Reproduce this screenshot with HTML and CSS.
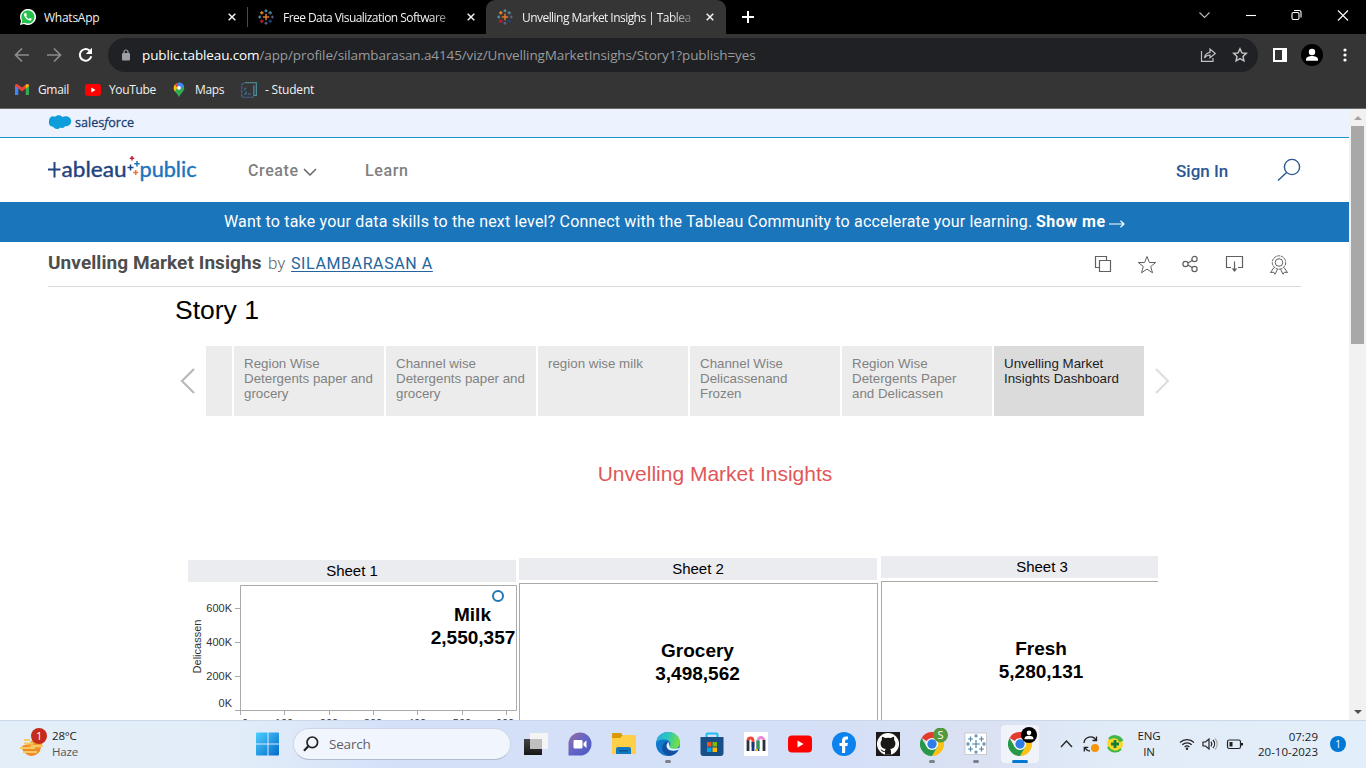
FILE: index.html
```html
<!DOCTYPE html>
<html lang="en">
<head>
<meta charset="utf-8">
<title>Unvelling Market Insighs | Tableau Public</title>
<link rel="stylesheet" href="styles.css">
</head>
<body>
<svg class="defs" width="0" height="0" aria-hidden="true">
  <defs>
    <symbol id="tableau" viewBox="0 0 16 16">
      <g fill="none" stroke-width="1.2">
        <path stroke="#e8762c" stroke-width="1.5" d="M8 4.8v6.4M4.8 8h6.4"/>
        <path stroke="#5b9aa8" d="M8 .3v3M6.500 1.800h3M1.700 6.500v3M.2 8h3"/>
        <path stroke="#5b6591" d="M8 12.700v3M6.500 14.200h3M14.300 6.500v3M12.800 8h3"/>
        <path stroke="#eb912c" d="M3.800 2v3.600M2 3.800h3.600"/>
        <path stroke="#59879b" d="M12.200 2v3.600M10.400 3.800H14"/>
        <path stroke="#c72035" d="M3.800 10.400V14M2 12.200h3.600"/>
        <path stroke="#1f457e" d="M12.200 10.400V14M10.400 12.200H14"/>
      </g>
    </symbol>
    <symbol id="close" viewBox="0 0 8 8"><path d="M.7.7l6.600 6.600M7.300.7L.7 7.300" fill="none" stroke="#f1f1f1" stroke-width="1.500"/></symbol>
    <symbol id="chrome" viewBox="0 0 24 24">
      <path fill="#e33b2e" d="M12 12L1.600 6A12 12 0 0 1 22.400 6z"/>
      <path fill="#fbc116" d="M12 12V6h10.400A12 12 0 0 1 12 24l5.200-9z"/>
      <path fill="#279847" d="M12 12l5.200 3L12 24A12 12 0 0 1 1.600 6l5.200 9z"/>
      <circle cx="12" cy="12" r="6" fill="#fff"/><circle cx="12" cy="12" r="4.700" fill="#2f7de9"/>
    </symbol>
    <symbol id="person" viewBox="0 0 22 22"><circle cx="11" cy="11" r="11" fill="#000"/><circle cx="11" cy="8" r="3.200" fill="#fff"/><path fill="#fff" d="M5 16.800v-1.500C5 13 8.500 12 11 12s6 1 6 3.300v1.500z"/></symbol>
  </defs>
</svg>

<header class="browser">
  <div class="tabs">
    <div class="tab tab-first">
      <svg width="16" height="16" viewBox="0 0 16 16"><path d="M0 16l1.100-4A8 8 0 1 1 4 14.900z" fill="#fff"/><path d="M1.500 14.500l.8-3A6.600 6.600 0 1 1 4.600 13.700z" fill="#25c04b"/><path d="M5 4c-1 .5-1.300 1.700-.5 3.200 1 2 2.700 3.600 4.700 4.300 1.400.4 2.500-.3 2.500-1.700L9.900 8.900l-1 1C7.700 9.500 6.600 8.400 6.100 7.300l.8-1L6.100 4z" fill="#fff"/></svg>
      <span class="tab-title whatsapp">WhatsApp</span>
      <svg class="x" width="8" height="8"><use href="#close"/></svg>
    </div>
    <div class="tab tab-second">
      <svg width="16" height="16"><use href="#tableau"/></svg>
      <span class="tab-title fade">Free Data Visualization Software</span>
      <svg class="x" width="8" height="8"><use href="#close"/></svg>
    </div>
    <div class="tab tab-active">
      <svg width="16" height="16"><use href="#tableau"/></svg>
      <span class="tab-title fade">Unvelling Market Insighs | Tablea</span>
      <svg class="x" width="8" height="8"><use href="#close"/></svg>
    </div>
    <svg class="new-tab" width="12" height="12" viewBox="0 0 12 12"><path d="M6 0v12M0 6h12" stroke="#fff" stroke-width="2"/></svg>
    <div class="window-controls">
      <svg width="150" height="12" viewBox="0 0 150 12" fill="none" stroke="#fff" stroke-width="1.100">
        <path d="M.5 3.500l5 5 5-5" stroke="#bbb"/><path d="M47 6.500h10"/><rect x="93" y="3.500" width="7" height="7" rx="1.500"/><path d="M95 1.500h5a2 2 0 0 1 2 2v5"/><path d="M139 1.500l10 10M149 1.500l-10 10"/>
      </svg>
    </div>
  </div>
  <div class="toolbar">
    <svg class="nav" width="84" height="18" viewBox="0 0 84 18" fill="none">
      <path d="M15 9H2M8 2.500L1.500 9 8 15.500M33 9h13M40 2.500L46.500 9 40 15.500" stroke="#8b8c8e" stroke-width="1.700"/>
      <path d="M75.500 4.500a5.800 5.800 0 1 0 1.800 5.800" stroke="#fff" stroke-width="2"/><path d="M78 1.800v6.200h-6.200z" fill="#fff"/>
    </svg>
    <div class="omnibox">
      <svg width="8" height="12" viewBox="0 0 8 12"><rect y="4" width="8" height="7.500" rx="1" fill="#9aa0a6"/><path d="M2 4.500V3a2 2 0 0 1 4 0v1.500" fill="none" stroke="#9aa0a6" stroke-width="1.200"/></svg>
      <span class="url"><b>public.tableau.com</b>/app/profile/silambarasan.a4145/viz/UnvellingMarketInsighs/Story1?publish=yes</span>
      <svg class="omni-icons" width="48" height="16" viewBox="0 0 48 16" fill="none" stroke="#c0c1c3" stroke-width="1.200">
        <path d="M1.500 4v10.400H13V11M4.500 11c.4-3.500 2.200-5.300 5.500-5.700V2l5.300 4.500-5.300 4.300V8C7.500 8 5.800 9 4.500 11z"/>
        <path stroke-width="1.500" d="M40 1.800l1.900 4.100 4.400.5-3.300 3 .9 4.400-3.900-2.200-3.900 2.200.9-4.400-3.300-3 4.400-.5z"/>
      </svg>
    </div>
    <svg class="panel-icon" width="14" height="14" viewBox="0 0 14 14"><path d="M1 1h12v12H1z" fill="#333" stroke="#fff" stroke-width="2"/><path d="M9 0h5v14H9z" fill="#fff"/></svg>
    <svg class="avatar" width="22" height="22"><use href="#person"/></svg>
    <svg class="dots" width="4" height="14" viewBox="0 0 4 14" fill="#fff"><circle cx="2" cy="2" r="1.600"/><circle cx="2" cy="7" r="1.600"/><circle cx="2" cy="12" r="1.600"/></svg>
  </div>
  <nav class="bookmarks">
    <svg width="14" height="11" viewBox="0 0 14 11"><path d="M0 1v10h3.300V4z" fill="#4285f4"/><path d="M14 1v10h-3.300V4z" fill="#34a853"/><path d="M0 1.800C0 .2 1.700-.5 3 .5l4 3.100 4-3.100c1.300-1 3-.3 3 1.300L7 7.400z" fill="#ea4335"/><path d="M10.700.8V4.600L14 2.100C14 .2 12 -.3 10.700.8z" fill="#fbbc04"/></svg>
    <span class="bm gmail">Gmail</span>
    <svg width="16" height="12" viewBox="0 0 16 12"><rect width="16" height="12" rx="3" fill="#f00"/><path d="M6.300 3.500v5l4.200-2.500z" fill="#fff"/></svg>
    <span class="bm youtube">YouTube</span>
    <svg width="12" height="16" viewBox="0 0 12 16"><path d="M6 15.500C5 11.500.7 10 .7 6A5.300 5.300 0 0 1 11.300 6c0 4-4.300 5.500-5.300 9.500z" fill="#34a853"/><path d="M.7 6.500A5.300 5.300 0 0 1 2 2.500L4.700 5 2 9.500C1.200 8.500.8 7.600.7 6.500z" fill="#fbbc04"/><path d="M2 2.500A5.300 5.300 0 0 1 4.600.9L5.500 4 4 6z" fill="#ea4335"/><path d="M4.600.9A5.300 5.300 0 0 1 11 4L7 7.500 5 4.200z" fill="#4285f4"/><circle cx="6" cy="5.800" r="1.900" fill="#fff"/></svg>
    <span class="bm maps">Maps</span>
    <svg width="16" height="16" viewBox="0 0 16 16" fill="none" stroke="#509ba1" stroke-width="1.100"><path d="M3.500.7h11.800v12.800h-2.500V3.500"/><path stroke="#3d6fa8" stroke-dasharray="3 1" d="M12.800 3.500V15.300H.8V2.500L3.500.7M3 12h8M3 8l3-3M4 12l2-3"/></svg>
    <span class="bm student">- Student</span>
  </nav>
</header>

<div class="viewport">
  <main class="page">
    <div class="salesforce">
      <svg width="88" height="18" viewBox="0 0 88 18"><path d="M1 8C1 4 4.500 2.300 7 3.800 9 1.400 13 1.800 14.200 4c3.600-2 9-.2 9 4.300 0 3.500-3.600 5.600-6 4.800-1 1.900-3 2.400-5 1.400-2 2.500-6 2-7.200-.9C2.700 14 .3 11.500 1 8z" fill="#0d9dda"/><text x="27" y="13.500" textLength="59" lengthAdjust="spacingAndGlyphs" class="sf-word">sales<tspan font-style="italic">f</tspan>orce</text></svg>
    </div>
    <div class="site-nav">
      <svg class="logo" width="150" height="32" viewBox="0 0 150 32">
        <path d="M0 15.500h12.500M6.500 8v15.500" fill="none" stroke="#1f447e" stroke-width="2"/>
        <text x="13.500" y="23.300" textLength="65" lengthAdjust="spacingAndGlyphs" class="word-tableau">ableau</text>
        <text x="91.500" y="23.300" textLength="57" lengthAdjust="spacingAndGlyphs" class="word-public">public</text>
        <g fill="none" stroke-width="1.500"><path stroke="#c72035" d="M84 2v4.400M81.800 4.200h4.400"/><path stroke="#1f447e" d="M82.500 10.500v6M79.500 13.500h6"/><path stroke="#1c74bb" d="M89 7v5.400M86.300 9.700h5.400"/><path stroke="#e8762c" d="M87.700 16v5M85.200 18.500h5"/></g>
      </svg>
      <span class="nav-link create">Create</span>
      <svg class="caret" width="14" height="8" viewBox="0 0 14 8"><path d="M1 1l6 6 6-6" fill="none" stroke="#666" stroke-width="1.500"/></svg>
      <span class="nav-link learn">Learn</span>
      <span class="nav-link signin">Sign In</span>
      <svg class="search" width="24" height="24" viewBox="0 0 24 24" fill="none" stroke="#2a5694" stroke-width="1.400"><circle cx="15" cy="9" r="7.600"/><path d="M9.600 14.400L1 22.500"/></svg>
    </div>
    <div class="banner"><span class="banner-copy">Want to take your data skills to the next level? Connect with the Tableau Community to accelerate your learning.</span><b>Show me</b><svg width="16" height="8" viewBox="0 0 16 8"><path d="M0 4h15M11.500.8L15 4l-3.500 3.200" fill="none" stroke="#fff" stroke-width="1.200"/></svg></div>
    <div class="viz-head">
      <h1>Unvelling Market Insighs</h1><span class="by">by</span><a class="author">SILAMBARASAN A</a>
      <svg class="actions" width="194" height="22" viewBox="0 0 194 22" fill="none" stroke="#606060" stroke-width="1.200">
        <path d="M5.500 12.500h-4v-11h11v4M5.500 5.500h11v11h-11z"/>
        <path stroke-width="1" d="M53 1.500l2.400 6h6.300l-5 4 1.800 6.300-5.500-3.700-5.500 3.700 1.800-6.300-5-4h6.300z"/>
        <circle cx="91.500" cy="9" r="2.600"/><circle cx="100.500" cy="4" r="2.600"/><circle cx="100.500" cy="14" r="2.600"/><path d="M94 8l4-2.500M94 10l4 2.500"/>
        <path d="M137 12.500h-4.500v-11h16v11H144M140.500 6.500v9"/><path d="M137.700 13.500h5.600l-2.800 3.500z" fill="#606060" stroke="none"/>
        <g stroke-width="1"><circle cx="185" cy="7.500" r="3.800"/><circle cx="185" cy="7.500" r="6.700" stroke-dasharray="3 .7"/><path d="M180 12.500l-3.500 5 3.200-.3 1.300 2 2.500-5M190 12.500l3.500 5-3.200-.3-1.300 2-2.500-5"/></g>
      </svg>
    </div>

    <section class="story">
      <h2>Story 1</h2>
      <div class="story-nav">
        <svg class="prev" width="16" height="28" viewBox="0 0 16 28"><path d="M14 2L2 14l12 12" fill="none" stroke="#b9b9b9" stroke-width="2.200"/></svg>
        <div class="points">
          <div class="point stub"></div>
          <div class="point">Region Wise<br>Detergents paper and<br>grocery</div>
          <div class="point">Channel wise<br>Detergents paper and<br>grocery</div>
          <div class="point">region wise milk</div>
          <div class="point">Channel Wise<br>Delicassenand<br>Frozen</div>
          <div class="point">Region Wise<br>Detergents Paper<br>and Delicassen</div>
          <div class="point current">Unvelling Market<br>Insights Dashboard</div>
        </div>
        <svg class="next" width="16" height="28" viewBox="0 0 16 28"><path d="M2 2l12 12L2 26" fill="none" stroke="#dedede" stroke-width="2.200"/></svg>
      </div>
      <h3>Unvelling Market Insights</h3>
      <div class="sheets">
        <div class="sheet sheet-1">
          <h4>Sheet 1</h4>
          <svg width="330" height="140" viewBox="0 0 330 140" class="chart">
            <path d="M52.500 133V3.500H328.500V128.500H47M47 26.500h5M47 60.500h5M47 94.500h5M96.500 128v5M141.500 128v5M185.500 128v5M229.500 128v5M274.500 128v5M318.500 128v5" fill="none" stroke="#aaa"/>
            <g text-anchor="end"><text x="44" y="30">600K</text><text x="44" y="64">400K</text><text x="44" y="98">200K</text><text x="44" y="125">0K</text></g>
            <text transform="translate(13 64.500) rotate(-90)" text-anchor="middle">Delicassen</text>
            <g text-anchor="middle"><text x="57" y="145">0</text><text x="96" y="145">100</text><text x="141" y="145">200</text><text x="185" y="145">300</text><text x="229" y="145">400</text><text x="274" y="145">500</text><text x="317" y="145">600</text></g>
            <circle cx="310" cy="14" r="5" fill="none" stroke="#1f77b4" stroke-width="2"/>
            <g class="mark" text-anchor="middle"><text x="284.500" y="39">Milk</text><text x="285" y="62">2,550,357</text></g>
          </svg>
        </div>
        <div class="sheet sheet-2"><h4>Sheet 2</h4><div class="box">Grocery<br>3,498,562</div></div>
        <div class="sheet sheet-3"><h4>Sheet 3</h4><div class="box">Fresh<br>5,280,131</div></div>
      </div>
    </section>
  </main>
  <div class="scrollbar">
    <svg width="17" height="17" viewBox="0 0 17 17"><path d="M5 11l4-4 4 4z" fill="#a3a3a3"/></svg>
    <div class="thumb"></div>
    <svg class="down" width="17" height="17" viewBox="0 0 17 17"><path d="M5 7l4 4 4-4z" fill="#505050"/></svg>
  </div>
</div>

<footer class="taskbar">
  <div class="weather">
    <svg width="28" height="30" viewBox="0 0 28 30"><path d="M2 18a9.500 9.500 0 0 0 19 1l1-7z" fill="#f08b24"/><path d="M12 12h11c0 4-2 7-5 9l-11-2z" fill="#f59b2c"/><path d="M4 12h6M4 15.500h9M0 20h15M11 18h12M3 24h14" stroke="#f4ca66" stroke-width="1.800"/><circle cx="19" cy="8" r="8" fill="#c42b1c"/><text x="19" y="12" text-anchor="middle" class="badge-num">1</text></svg>
    <div class="weather-text"><span>28°C</span><span class="dim">Haze</span></div>
  </div>
  <svg class="start" width="24" height="24" viewBox="0 0 24 24"><defs><linearGradient id="win" gradientUnits="userSpaceOnUse" x1="0" y1="0" x2="24" y2="24"><stop stop-color="#4dd0ff"/><stop offset="1" stop-color="#0067c8"/></linearGradient></defs><path fill="url(#win)" d="M1 .5h10.500v11H0v-10a1 1 0 0 1 1-1zM12.500.5H22a1 1 0 0 1 1 1v10H12.500zM0 12.500h11.500v11H1a1 1 0 0 1-1-1zM12.500 12.500H23v10a1 1 0 0 1-1 1h-9.500z"/></svg>
  <div class="search-box"><svg width="16" height="16" viewBox="0 0 16 16"><circle cx="9.300" cy="6.300" r="5.300" fill="none" stroke="#222" stroke-width="1.700"/><path d="M5.300 10.300L1 14.700" stroke="#222" stroke-width="2.200"/></svg><span>Search</span></div>
  <div class="apps">
    <div class="app"><svg width="24" height="24" viewBox="0 0 24 24"><defs><linearGradient id="tv" x2="0" y2="1"><stop stop-color="#444"/><stop offset="1" stop-color="#161616"/></linearGradient></defs><path fill="url(#tv)" d="M0 7h18v16H0z"/><path fill="#f4f4f4" d="M6 1h18v16H6z"/><path fill="#bfbfbf" d="M6 7h12v10H6z"/></svg></div>
    <div class="app"><svg width="24" height="24" viewBox="0 0 24 24"><defs><linearGradient id="chat" x2="1" y2="1"><stop stop-color="#9a6b9e"/><stop offset=".5" stop-color="#6264c7"/><stop offset="1" stop-color="#4a55c0"/></linearGradient></defs><path fill="url(#chat)" d="M.5 23.500V12A11.500 11.500 0 1 1 12 23.500z"/><rect x="5.500" y="8" width="9" height="8.500" rx="1" fill="#fff"/><path d="M15.500 11l3-2.500V16l-3-2.500z" fill="#fff"/></svg></div>
    <div class="app"><svg width="24" height="24" viewBox="0 0 24 24"><path fill="#d99a05" d="M0 2a1 1 0 0 1 1-1h8l2 3-2 2H0z"/><path fill="#ffcf48" d="M0 6h8l3-3h12a1 1 0 0 1 1 1v18H0z"/><path fill="#1177bf" d="M4 22v-5a2 2 0 0 1 2-2h11a2 2 0 0 1 2 2v5z"/><path fill="#0a5796" d="M7 18h9v1.500H7z"/></svg></div>
    <div class="app running"><svg width="24" height="24" viewBox="0 0 24 24"><defs><linearGradient id="edge" x2="1" y2=".2"><stop stop-color="#24a9e4"/><stop offset=".5" stop-color="#2ac6c0"/><stop offset="1" stop-color="#72df45"/></linearGradient></defs><circle cx="12" cy="12" r="12" fill="#0f77cd"/><path d="M.2 11C1 4 6 0 12 0c7 0 12 5 12 10.500 0 4.500-3.500 6.500-7 6.500-3.500 0-4.500-1.500-3.500-2.700C16 11 13 7.500 8.500 7.500 4 7.500 1 9 .2 11z" fill="url(#edge)"/><path d="M8 11c-4 5-1 12 6 12.800A12 12 0 0 0 22.500 18c-5 2.500-12 1.500-12-4 0-2 1-3 2-4-1.500-.5-3.500 0-4.500 1z" fill="#12509d"/><path d="M12.500 10c-3 2-2.500 7 2 8.300 3 .8 6 .3 8.300-.8l1-1.500-3.800.5c-4 .7-7-.2-6.500-2.200z" fill="#e5f0fa"/></svg></div>
    <div class="app"><svg width="24" height="24" viewBox="0 0 24 24"><path d="M6.500 7V2.500a1 1 0 0 1 1-1h9a1 1 0 0 1 1 1V7" fill="none" stroke="#20bdf2" stroke-width="2"/><path fill="#174f86" d="M.5 5h23v16a3 3 0 0 1-3 3h-17a3 3 0 0 1-3-3z"/><path fill="#f25022" d="M7 10h4.500v4.500H7z"/><path fill="#7fba00" d="M12.500 10H17v4.500h-4.500z"/><path fill="#00a4ef" d="M7 15.500h4.500V20H7z"/><path fill="#ffb900" d="M12.500 15.500H17V20h-4.500z"/></svg></div>
    <div class="app"><svg width="24" height="24" viewBox="0 0 24 24" fill="none" stroke-width="2.800"><path fill="#fff" d="M0 0h24v24H0z"/><path d="M4 19V8" stroke="#2b3040"/><path d="M4 8.500a2.500 2.500 0 0 1 5 0V15" stroke="#ef4935"/><path d="M9 10v9M14 19V9" stroke="#16377a"/><path d="M14 17V8" stroke="#2c9b52"/><path d="M14 8.500a3 3 0 0 1 6 0" stroke="#e88ad3"/><path d="M20 8v11" stroke="#2b3040"/><path d="M11 17h3v2h-3z" fill="#f5b91c"/></svg></div>
    <div class="app"><svg width="24" height="24" viewBox="0 0 24 24"><rect y="3.500" width="24" height="17" rx="4" fill="#f00"/><path fill="#fff" d="M9.500 8.500v7l6-3.500z"/></svg></div>
    <div class="app"><svg width="24" height="24" viewBox="0 0 24 24"><circle cx="12" cy="12" r="12" fill="#0b82ee"/><path fill="#fff" d="M10 21v-7H7.500v-3H10V8.800C10 6 11.500 4.500 14 4.500h2v2.900h-1.200c-1.300 0-1.600.7-1.600 1.700V11h2.700l-.5 3h-2.200v7z"/></svg></div>
    <div class="app"><svg width="24" height="24" viewBox="0 0 24 24"><path fill="#1b1817" d="M0 0h24v24H0z"/><circle cx="12" cy="12" r="11" fill="#fff"/><path fill="#1b1817" d="M9 22.800v-3c-3 .6-3.600-1-4.500-2.200 1.800-.3 2.300 2 4.500 1.200 0-.8.300-1.500.8-1.800-3-.5-5.200-2-5.200-5.500 0-1.600.5-2.500 1.300-3.500-.3-1-.2-2.300.2-3.300 1.200 0 2.300.8 3.200 1.400a11 11 0 0 1 5.400 0c.9-.6 2-1.400 3.200-1.400.4 1 .5 2.300.2 3.300.8 1 1.300 1.900 1.300 3.500 0 3.500-2.200 5-5.200 5.500.5.500.8 1.200.8 2.200v3.600z"/></svg></div>
    <div class="app running"><svg width="32" height="32" viewBox="0 0 32 32"><use href="#chrome" x="4" y="4" width="24" height="24"/><circle cx="24.500" cy="7" r="7.500" fill="#55993b"/><text x="24.500" y="11" text-anchor="middle" class="s-badge">S</text></svg></div>
    <div class="app running"><svg width="24" height="24" viewBox="0 0 24 24"><path fill="#fff" stroke="#bbb" stroke-width=".7" d="M1 1h21.500v21.500H1z"/><path d="M12 8v8M8 12h8M12 2v3.500M10.200 4h3.600M12 18.500V22M10.200 20h3.600M4 10v4M2 12h4M20 10v4M18 12h4M6.500 4.500v5M4 7h5M17.500 4.500v5M15 7h5M6.500 14.500v5M4 17h5M17.500 14.500v5M15 17h5" fill="none" stroke="#4d86aa" stroke-width="1.200"/></svg></div>
    <div class="app running selected"><svg width="32" height="32" viewBox="0 0 32 32"><use href="#chrome" x="4" y="4" width="24" height="24"/><use href="#person" x="17" y="-1" width="16" height="16"/></svg></div>
  </div>
  <svg class="tray-left" width="64" height="18" viewBox="0 0 64 18" fill="none" stroke="#222" stroke-width="1.300">
    <path d="M1 12l5.500-6 5.500 6"/>
    <path d="M24 8a6.500 6.500 0 0 1 12-3M36.500 1.500V5.500h-4M25 12.500c1 2 3 3.500 5 3.500M24.300 16.500v-4.200h4"/><circle cx="35" cy="13" r="4" fill="#f7940a" stroke="none"/>
    <circle cx="55" cy="9" r="8" fill="#f8d92b" stroke="none"/><path d="M49 4a8 8 0 0 1 13 1l-2 1a7 7 0 0 0-11-2M48 12a8 8 0 0 0 13 2" stroke="#43b649" stroke-width="2"/><path d="M55 5v8M51 9h8" stroke="#187d39" stroke-width="2.800"/>
  </svg>
  <div class="lang"><span>ENG</span><span>IN</span></div>
  <svg class="tray-right" width="66" height="16" viewBox="0 0 66 16" fill="none" stroke="#222" stroke-width="1.200">
    <path d="M1 6.500a10 10 0 0 1 14 0M3.300 8.800a6.700 6.700 0 0 1 9.400 0M5.600 11a3.500 3.500 0 0 1 4.800 0"/><circle cx="8" cy="12.700" r="1.200" fill="#222" stroke="none"/>
    <path d="M24 6h2.500L30 3v10l-3.500-3H24zM32 5.700a4 4 0 0 1 0 4.600M34 4a6 6 0 0 1 0 8"/><path stroke="#aaa" d="M36 2.500a8 8 0 0 1 0 11"/>
    <rect x="48.500" y="4" width="13" height="8.500" rx="1.800"/><path d="M50.500 6h3v4.500h-3z" fill="#222" stroke="none"/><path d="M63 7v2.500" stroke-width="2"/>
  </svg>
  <div class="clock"><span>07:29</span><span>20-10-2023</span></div>
  <div class="notice">1</div>
</footer>
</body>
</html>
```

FILE: styles.css
```css
* { box-sizing: border-box; }
body { margin: 0; width: 1366px; height: 768px; overflow: hidden; display: flex; flex-direction: column; background: #fff; font-family: "Open Sans", "Noto Sans", sans-serif; }
svg { display: block; flex: none; }
h1, h2, h3, h4 { margin: 0; font-weight: 400; }
.defs { position: absolute; }

.browser { height: 109px; flex: none; background: #353535; border-bottom: 1px solid #69696b; color: #f1f1f1; }
.tabs { height: 34px; background: #000; display: flex; align-items: center; }
.tab { display: flex; align-items: center; height: 34px; font-size: 12px; letter-spacing: -0.25px; white-space: nowrap; }
.tab-first { width: 248px; padding-left: 20px; background: linear-gradient(#4a4a4a, #4a4a4a) no-repeat 247px 7px / 1px 20px; }
.tab-second { width: 238px; padding-left: 10px; }
.tab-title { margin-left: 9px; width: 171px; }
.whatsapp { margin-left: 8px; width: 184px; }
.fade { letter-spacing: -0.55px; -webkit-mask-image: linear-gradient(90deg, #000 148px, rgba(0, 0, 0, .25) 171px); mask-image: linear-gradient(90deg, #000 148px, rgba(0, 0, 0, .25) 171px); }
.tab-second .x { margin-left: 13px; }
.tab-active { width: 240px; padding-left: 11px; background: #353535; border-radius: 9px 9px 0 0; }
.tab-active .x { margin-left: 13px; }
.new-tab { margin-left: 16px; }
.window-controls { display: flex; justify-content: flex-end; flex: 1; padding-right: 17px; padding-bottom: 5px; }
.toolbar { height: 42px; display: flex; align-items: center; }
.nav { margin-left: 14px; }
.omnibox { margin-left: 10px; width: 1150px; height: 34px; border-radius: 17px; background: #202124; display: flex; align-items: center; padding: 0 10px 0 14px; }
.url { margin-left: 12px; font-size: 13.500px; letter-spacing: -0.117px; color: #999b9e; white-space: nowrap; }
.url b { font-weight: 400; color: #fff; }
.omni-icons { margin-left: auto; }
.panel-icon { margin-left: 15px; }
.avatar { margin-left: 14px; }
.dots { margin-left: 20px; }
.bookmarks { height: 28px; padding-left: 15px; padding-bottom: 1px; display: flex; align-items: center; font-size: 12px; letter-spacing: -0.35px; white-space: nowrap; }
.bm { margin-left: 8px; }
.gmail { width: 47px; margin-left: 9px; }
.youtube { width: 64px; }
.maps { width: 46px; margin-left: 10px; }
.student { margin-left: 8px; letter-spacing: -0.2px; }

.viewport { height: 611px; flex: none; display: flex; overflow: hidden; }
.page { width: 1349px; font-family: Roboto, "Liberation Sans", sans-serif; }
.salesforce { height: 29px; padding: 4px 0 0 48px; background: #edf3fe; border-bottom: 1px solid #1b96cd; }
.sf-word { font: 500 13px "Open Sans", sans-serif; fill: #173d74; stroke: #173d74; stroke-width: .3px; }
.site-nav { height: 64px; display: flex; align-items: center; padding-left: 48px; }
.word-tableau, .word-public { font: 400 21.500px Lato, sans-serif; fill: #1f447e; stroke: #1f447e; stroke-width: .4px; }
.word-public { fill: #1c74bb; stroke: #1c74bb; }
.nav-link { font-weight: 500; font-size: 16px; color: #808080; white-space: nowrap; }
.create { margin-left: 50px; width: 51px; letter-spacing: .6px; }
.caret { margin-left: 4px; margin-top: 3px; }
.learn { margin-left: 48px; letter-spacing: .6px; }
.signin { margin-left: auto; width: 53px; color: #2a5694; font-size: 17px; margin-top: 2px; }
.search { margin: 0 48px 0 48px; }
.banner { height: 40px; background: #1b75bb; color: #fff; font-size: 16px; display: flex; align-items: center; padding-left: 224px; padding-bottom: 2px; white-space: nowrap; }
.banner-copy { width: 812px; letter-spacing: .178px; }
.banner b { width: 70px; letter-spacing: .5px; }
.banner svg { margin-left: 3px; margin-top: 5px; }
.viz-head { margin: 0 48px; height: 45px; border-bottom: 1px solid #dadada; display: flex; align-items: center; white-space: nowrap; padding-bottom: 2px; }
.viz-head h1 { width: 220px; font-size: 19px; font-weight: 700; color: #4e4e4e; letter-spacing: .08px; margin-top: -2px; }
.by { width: 23px; color: #666; font-weight: 300; font-size: 17px; }
.author { font-size: 16px; color: #24659d; text-decoration: underline; text-underline-offset: 2px; letter-spacing: .6px; }
.actions { margin-left: auto; margin-right: 13px; margin-top: 5px; }

.story { width: 1010px; margin-left: 175px; font-family: "Liberation Sans", Arial, sans-serif; }
.story h2 { height: 59px; padding-top: 8px; font-size: 26.500px; line-height: 31px; color: #000; }
.story-nav { height: 70px; display: flex; align-items: center; padding-left: 5px; }
.points { margin: 0 10px; display: flex; gap: 2px; height: 70px; }
.point { width: 150px; padding: 10px 0 0 10px; background: #ececec; color: #828282; font-size: 13.330px; line-height: 15px; white-space: nowrap; }
.point.stub { width: 26px; padding: 0; }
.point.current { background: #dbdbdb; color: #1e1e1e; }
.story h3 { margin: 45px 0 0 70px; width: 940px; text-align: center; color: #e15759; font-size: 21px; line-height: 26px; height: 95px; }
.sheets { display: flex; margin-left: 13px; height: 164px; overflow: hidden; color: #000; }
.sheet h4 { height: 22px; background: #ebecf0; text-align: center; font-size: 15px; line-height: 22px; }
.sheet-1 { padding-top: 4px; width: 331px; }
.sheet-1 h4 { width: 328px; }
.sheet-2 { padding-top: 2px; width: 362px; }
.sheet-2 h4 { width: 358px; }
.sheet-3 { width: 277px; }
.sheet-3 h4 { padding-left: 45px; }
.chart { font-size: 11px; fill: #333; }
.mark { font-size: 19px; font-weight: 700; fill: #000; }
.box { margin-top: 3px; height: 160px; border: 1px solid #aaa; padding-top: 55px; text-align: center; font-size: 19px; font-weight: 700; line-height: 23px; }
.sheet-2 .box { width: 359px; padding-right: 2px; }
.sheet-3 .box { border-right: 0; padding-left: 42px; }
.scrollbar { width: 17px; height: 611px; background: #f1f1f1; display: flex; flex-direction: column; }
.thumb { width: 13px; height: 218px; margin-left: 2px; background: #a8a8a8; }
.down { margin-top: auto; }

.taskbar { height: 48px; flex: none; display: flex; align-items: center; border-top: 1px solid #cbd8ea; padding-bottom: 1px; background: linear-gradient(90deg, #e3eef8 0%, #e3edf9 17%, #d3e0f8 29%, #d5e0f7 62%, #dae1f2 72%, #e2ecf8 82%, #e2eef9 100%); color: #1c1c1c; font-size: 12px; letter-spacing: -.2px; }
.weather { width: 256px; display: flex; padding-left: 20px; }
.weather-text { display: flex; flex-direction: column; margin-left: 4px; line-height: 16px; font-size: 11.500px; }
.dim { color: #555; }
.badge-num { font-size: 11px; fill: #fff; }
.search-box { margin-left: 13px; width: 218px; height: 32px; border-radius: 16px; background: #f1f5fd; border: 1px solid #cdd6e7; border-bottom-color: #b3bdd0; display: flex; align-items: center; padding-left: 9px; font-size: 13.500px; color: #5e6065; }
.search-box span { margin-left: 10px; }
.apps { margin-left: 3px; display: flex; }
.app { width: 44px; height: 46px; display: grid; place-items: center; position: relative; }
.running::after { content: ""; position: absolute; left: 19px; bottom: 4px; width: 6px; height: 3px; border-radius: 2px; background: #7c8188; }
.selected::before { content: ""; position: absolute; left: 3px; top: 4px; width: 38px; height: 38px; border-radius: 4px; background: #f0f3fa; }
.selected svg { position: relative; overflow: visible; }
.selected::after { left: 14px; width: 16px; background: #0078d4; }
.s-badge { font-size: 11px; fill: #fff; }
.tray-left { margin-left: 18px; }
.lang { width: 40px; margin-left: 5px; display: flex; flex-direction: column; text-align: center; line-height: 16px; font-size: 11.500px; }
.tray-right { margin-left: 10px; }
.clock { width: 73px; display: flex; flex-direction: column; text-align: right; line-height: 15px; font-size: 11.500px; letter-spacing: 0; }
.notice { margin-left: 12px; width: 16px; height: 16px; border-radius: 50%; background: #0078d4; color: #fff; text-align: center; font-size: 10px; line-height: 16px; }
```
